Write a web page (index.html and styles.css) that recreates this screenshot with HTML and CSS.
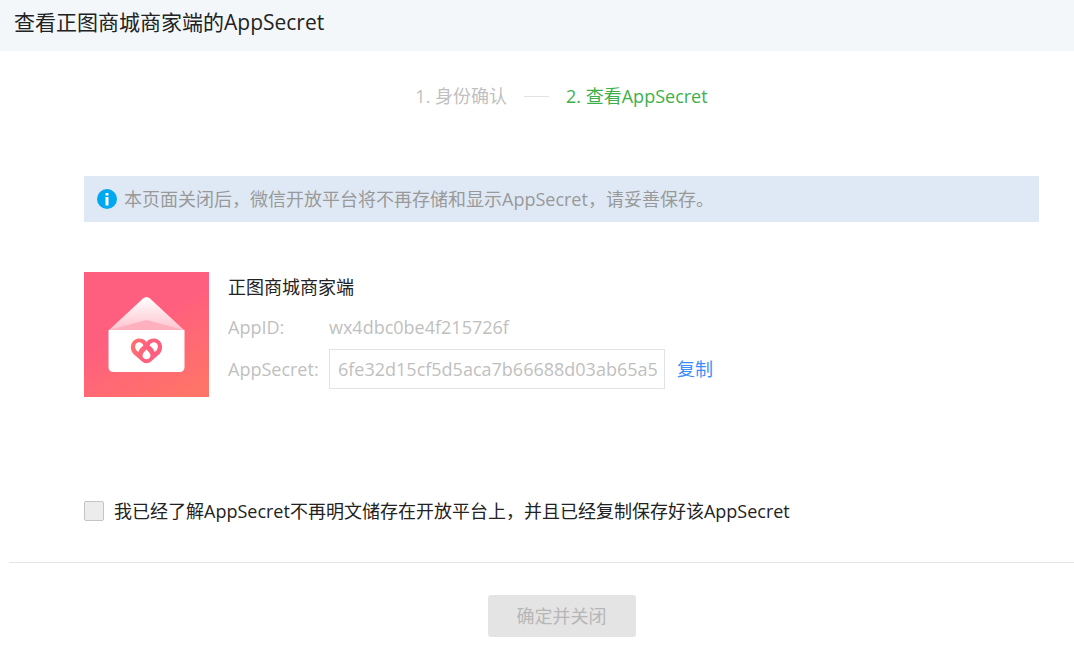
FILE: index.html
```html
<!DOCTYPE html>
<html lang="zh-CN">
<head>
<meta charset="utf-8">
<meta name="viewport" content="width=device-width, initial-scale=1">
<title>查看正图商城商家端的AppSecret</title>
<link rel="stylesheet" href="styles.css">
</head>
<body>
<header class="dialog-header">
  <h1 class="dialog-title">查看正图商城商家端的AppSecret</h1>
</header>
<main class="dialog-body">
  <ol class="steps">
    <li class="step">1. 身份确认</li>
    <li class="step step-current" aria-current="step">2. 查看AppSecret</li>
  </ol>
  <p class="notice">
    <svg class="notice-icon" viewBox="0 0 20 20" aria-hidden="true">
      <circle cx="10" cy="10" r="10" fill="#00a8f0"/>
      <rect x="8.500" y="4" width="3" height="2.500" fill="#fff"/>
      <rect x="8.500" y="8" width="3" height="8.500" fill="#fff"/>
    </svg>
    <span>本页面关闭后，微信开放平台将不再存储和显示AppSecret，请妥善保存。</span>
  </p>
  <section class="app">
    <svg class="app-logo" viewBox="0 0 125 125" role="img" aria-label="正图商城商家端">
      <defs>
        <linearGradient id="bg" x1="0.25" y1="0" x2="0.8" y2="1">
          <stop offset="0.4" stop-color="#ff5f7e"/>
          <stop offset="1" stop-color="#ff7468"/>
        </linearGradient>
        <linearGradient id="flap" x1="0" y1="0" x2="0" y2="1">
          <stop offset="0" stop-color="#fff"/>
          <stop offset="1" stop-color="#ffc3cf"/>
        </linearGradient>
        <linearGradient id="heart" x1="0" y1="0" x2="1" y2="0.3">
          <stop offset="0" stop-color="#ff7468"/>
          <stop offset="0.6" stop-color="#ff5f7e"/>
        </linearGradient>
      </defs>
      <rect width="125" height="125" fill="url(#bg)"/>
      <path d="M25 58 L59 26.500 Q62.500 23.500 66 26.500 L100 58 Z" fill="url(#flap)"/>
      <path d="M25 58 L62.500 48 L100 58 Z" fill="#ffb0bf"/>
      <path d="M24.500 58 H100.500 V95 Q100.500 100 95.500 100 H29.500 Q24.500 100 24.500 95 Z" fill="#fff"/>
      <path d="M62.500 70 C59.500 66.500 55.500 66 52.500 67 C46.500 69 45 77 49.500 82 L57.500 89 Q62.500 93.500 67.500 89 L75.500 82 C80 77 78.500 69 72.500 67 C69.500 66 65.500 66.500 62.500 70 Z" fill="url(#heart)"/>
      <path d="M54 70.500 C50.500 71.500 50.500 76 52.500 78.500 L54.500 80 C55 77.500 57 75.500 59.500 73.500 C58 70.500 56 70 54 70.500 Z M71 70.500 C74.500 71.500 74.500 76 72.500 78.500 L70.500 80 C70 77.500 68 75.500 65.500 73.500 C67 70.500 69 70 71 70.500 Z M62.500 77.500 C60.500 79.500 58.500 81.500 58.500 83.500 C58.500 88.500 66.500 88.500 66.500 83.500 C66.500 81.500 64.500 79.500 62.500 77.500 Z" fill="#fff"/>
    </svg>
    <div class="app-info">
      <h2 class="app-name">正图商城商家端</h2>
      <div class="field">
        <span class="field-label">AppID:</span>
        <span>wx4dbc0be4f215726f</span>
      </div>
      <div class="field field-secret">
        <label class="field-label" for="secret">AppSecret:</label>
        <input class="secret" id="secret" type="text" readonly value="6fe32d15cf5d5aca7b66688d03ab65a5">
        <a class="copy" href="#secret">复制</a>
      </div>
    </div>
  </section>
  <div class="agreement">
    <input class="agreement-box" id="agree" type="checkbox">
    <label for="agree">我已经了解AppSecret不再明文储存在开放平台上，并且已经复制保存好该AppSecret</label>
  </div>
</main>
<footer class="dialog-footer">
  <button class="confirm" type="button" disabled>确定并关闭</button>
</footer>
</body>
</html>
```
FILE: styles.css
```css
* {
  box-sizing: border-box;
}

body {
  margin: 0;
  background: #fff;
  color: #222;
  font-family: "Open Sans", "Noto Sans CJK SC", sans-serif;
  font-size: 18px;
  line-height: 26px;
}

h1, h2, p, ol {
  margin: 0;
  padding: 0;
  font-weight: 400;
}

input, button {
  font: inherit;
}

.dialog-header {
  padding: 8px 14px 15px;
  background: #f3f7fa;
}

.dialog-title {
  font-size: 21px;
  line-height: 28px;
}

.dialog-body {
  padding: 32px 35px 38px 84px;
}

.steps {
  display: flex;
  justify-content: center;
  list-style: none;
  color: #bfbfbf;
}

.step {
  display: flex;
  align-items: center;
}

.step-current {
  color: #3eb04b;
}

.step-current::before {
  content: "";
  width: 25px;
  height: 1px;
  margin: 0 17px;
  background: #e2e2e2;
}

.notice {
  display: flex;
  align-items: center;
  gap: 7px;
  margin-top: 67px;
  padding: 10px 13px;
  background: #dfe9f5;
  color: #999;
}

.notice-icon {
  flex: none;
  width: 20px;
  height: 20px;
}

.app {
  display: flex;
  gap: 19px;
  margin-top: 50px;
}

.app-logo {
  flex: none;
  width: 125px;
  height: 125px;
}

.app-info {
  padding-top: 2px;
}

.app-name {
  font-size: 18px;
}

.field {
  display: flex;
  align-items: center;
  margin-top: 14px;
  color: #bfbfbf;
}

.field-secret {
  margin-top: 9px;
}

.field-label {
  width: 101px;
}

.secret {
  width: 336px;
  height: 40px;
  padding: 0 7px 0 8px;
  border: 1px solid #e2e3e8;
  background: #fff;
  color: #bfbfbf;
  outline: none;
}

.copy {
  margin-left: 12px;
  color: #3a8eff;
  text-decoration: none;
}

.agreement {
  display: flex;
  align-items: center;
  gap: 10px;
  margin-top: 101px;
}

.agreement-box {
  appearance: none;
  flex: none;
  width: 20px;
  height: 20px;
  margin: 0;
  border: 1px solid #c4c4c4;
  border-radius: 2px;
  background: #ececec;
}

.dialog-footer {
  display: flex;
  justify-content: center;
  margin-left: 9px;
  padding: 32px 35px 29px 75px;
  border-top: 1px solid #e5e5e5;
}

.confirm {
  padding: 8px 29px;
  border: 0;
  border-radius: 3px;
  background: #e4e4e4;
  color: #b6b6b6;
}
```
